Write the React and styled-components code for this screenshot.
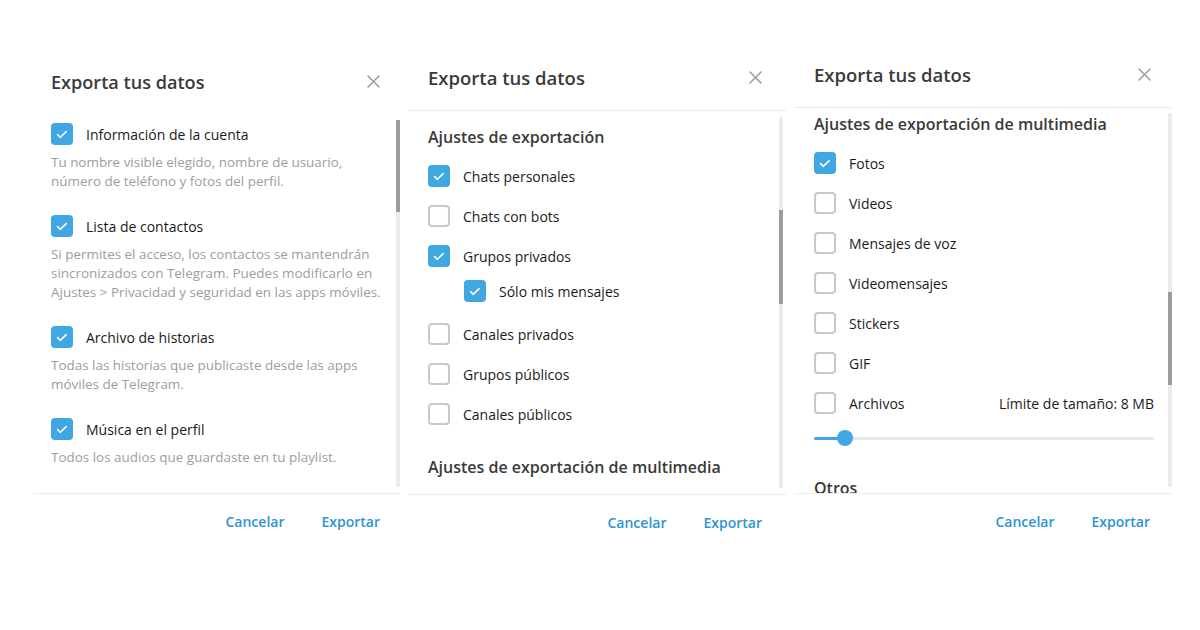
import React from "react";
import styled, { createGlobalStyle } from "styled-components";

const Global = createGlobalStyle`
  html, body { margin: 0; padding: 0; background: #ffffff; }
  body { font-family: "Open Sans", "Noto Sans", sans-serif; -webkit-font-smoothing: antialiased; }
  * { box-sizing: border-box; }
`;

const BLUE = "#40a7e3";

const Page = styled.div`
  width: 1200px;
  height: 630px;
  display: grid;
  grid-template-columns: 367px 378px 378px;
  column-gap: 8px;
  align-items: start;
  padding-left: 33px;
  overflow: hidden;
`;

const Dialog = styled.section`
  display: flex;
  flex-direction: column;
  margin-top: ${(p) => p.$top}px;
  background: #fff;
`;

const Header = styled.header`
  height: 62px;
  display: flex;
  align-items: center;
  justify-content: space-between;
  padding: 0 ${(p) => p.$padR}px 4px ${(p) => p.$padL}px;
  border-bottom: 1px solid ${(p) => (p.$divided ? "#ececec" : "transparent")};
`;

const Title = styled.h2`
  margin: 0;
  font-size: ${(p) => p.$size}px;
  font-weight: 600;
  color: #3a3a3a;
  letter-spacing: 0;
`;

const CloseButton = styled.button`
  border: 0;
  background: none;
  padding: 0;
  width: 14px;
  height: 14px;
  display: flex;
  align-items: center;
  justify-content: center;
  cursor: pointer;
`;

const Body = styled.div`
  position: relative;
  height: ${(p) => p.$height}px;
  overflow: hidden;
  padding: ${(p) => p.$padTop}px ${(p) => p.$padR}px 0 ${(p) => p.$padL}px;
`;

const Track = styled.div`
  position: absolute;
  right: ${(p) => p.$right}px;
  top: ${(p) => p.$top}px;
  bottom: 6px;
  width: 4px;
  background: #ececec;
`;

const Thumb = styled.div`
  position: absolute;
  left: 0;
  width: 4px;
  top: ${(p) => p.$offset}px;
  height: ${(p) => p.$length}px;
  background: #9c9c9c;
`;

const Option = styled.div`
  margin-bottom: 24px;
`;

const CheckLine = styled.label`
  display: flex;
  align-items: center;
  gap: 13px;
  height: ${(p) => p.$height || 22}px;
  padding-left: ${(p) => p.$indent || 0}px;
  margin-bottom: ${(p) => p.$after || 0}px;
  font-size: 14px;
  color: #1a1a1a;
`;

const LabelText = styled.span`
  flex: 1;
`;

const SideNote = styled.span`
  font-size: 14px;
  color: #1a1a1a;
`;

const Box = styled.span`
  width: 22px;
  height: 22px;
  flex: none;
  border-radius: 4px;
  display: flex;
  align-items: center;
  justify-content: center;
  background: ${(p) => (p.$on ? BLUE : "#fff")};
  border: ${(p) => (p.$on ? "none" : "2px solid #c9c9c9")};
`;

const Description = styled.p`
  margin: 8px 0 0;
  font-size: 13.45px;
  line-height: 19px;
  color: #9d9d9d;
`;

const Section = styled.h3`
  margin: ${(p) => p.$before || 0}px 0 7px;
  font-size: 16px;
  line-height: 24px;
  font-weight: 600;
  color: #3a3a3a;
`;

const SliderRow = styled.div`
  position: relative;
  height: 30px;
  display: flex;
  align-items: center;
`;

const SliderTrack = styled.div`
  position: relative;
  width: 100%;
  height: 3px;
  border-radius: 2px;
  background: #e1e9ef;
`;

const SliderFill = styled.div`
  position: absolute;
  left: 0;
  top: 0;
  bottom: 0;
  border-radius: 2px;
  background: ${BLUE};
`;

const SliderKnob = styled.div`
  position: absolute;
  top: 50%;
  width: 16px;
  height: 16px;
  margin: -8px 0 0 -8px;
  border-radius: 50%;
  background: ${BLUE};
`;

const Footer = styled.footer`
  height: 56px;
  border-top: 1px solid #ececec;
  display: flex;
  align-items: center;
  justify-content: flex-end;
  gap: 37px;
  padding-right: ${(p) => p.$padR}px;
  padding-bottom: 1px;
`;

const TextButton = styled.button`
  border: 0;
  background: none;
  padding: 0;
  font-family: inherit;
  font-size: 14px;
  font-weight: 600;
  color: #2e93d6;
  cursor: pointer;
`;

function Check({ on }) {
  return (
    <Box $on={on}>
      {on && (
        <svg width="22" height="22" viewBox="0 0 22 22">
          <path d="M6.6 11.6 L9.4 14.3 L15.2 8.6" fill="none" stroke="#fff" strokeWidth="1.6" strokeLinecap="round" strokeLinejoin="round" />
        </svg>
      )}
    </Box>
  );
}

function CloseIcon() {
  return (
    <svg width="13" height="13" viewBox="0 0 13 13">
      <path d="M1 1 L12 12 M12 1 L1 12" stroke="#9a9a9a" strokeWidth="1.5" strokeLinecap="round" />
    </svg>
  );
}

function Item({ on, label, indent, height = 40, after, note }) {
  return (
    <CheckLine $height={height} $indent={indent} $after={after}>
      <Check on={on} />
      <LabelText>{label}</LabelText>
      {note && <SideNote>{note}</SideNote>}
    </CheckLine>
  );
}

function Scrollbar({ right, top, offset, length }) {
  return (
    <Track $right={right} $top={top}>
      <Thumb $offset={offset} $length={length} />
    </Track>
  );
}

function DialogFrame({ top, padL, closeR, divided, titleSize, bodyHeight, bodyPadTop, bodyPadR, footerR, scroll, children }) {
  return (
    <Dialog $top={top}>
      <Header $padL={padL} $padR={closeR} $divided={divided}>
        <Title $size={titleSize}>Exporta tus datos</Title>
        <CloseButton aria-label="Cerrar">
          <CloseIcon />
        </CloseButton>
      </Header>
      <Body $height={bodyHeight} $padTop={bodyPadTop} $padL={padL} $padR={bodyPadR}>
        {children}
        <Scrollbar {...scroll} />
      </Body>
      <Footer $padR={footerR}>
        <TextButton>Cancelar</TextButton>
        <TextButton>Exportar</TextButton>
      </Footer>
    </Dialog>
  );
}

const accountOptions = [
  { label: "Información de la cuenta", text: ["Tu nombre visible elegido, nombre de usuario,", "número de teléfono y fotos del perfil."] },
  { label: "Lista de contactos", text: ["Si permites el acceso, los contactos se mantendrán", "sincronizados con Telegram. Puedes modificarlo en", "Ajustes > Privacidad y seguridad en las apps móviles."] },
  { label: "Archivo de historias", text: ["Todas las historias que publicaste desde las apps", "móviles de Telegram."] },
  { label: "Música en el perfil", text: ["Todos los audios que guardaste en tu playlist."] },
];

const mediaOptions = [
  { label: "Fotos", on: true },
  { label: "Videos" },
  { label: "Mensajes de voz" },
  { label: "Videomensajes" },
  { label: "Stickers" },
  { label: "GIF" },
];

export default function App() {
  return (
    <>
      <Global />
      <Page>
        <DialogFrame
          top={53}
          padL={18}
          closeR={20}
          titleSize={18.1}
          bodyHeight={378}
          bodyPadTop={8}
          bodyPadR={10}
          footerR={20}
          scroll={{ right: 0, top: 5, offset: 0, length: 92 }}
        >
          {accountOptions.map((o) => (
            <Option key={o.label}>
              <Item on label={o.label} height={22} />
              <Description>
                {o.text.map((line, i) => (
                  <React.Fragment key={i}>
                    {line}
                    {i < o.text.length - 1 && <br />}
                  </React.Fragment>
                ))}
              </Description>
            </Option>
          ))}
        </DialogFrame>

        <DialogFrame
          top={49}
          padL={20}
          closeR={24}
          divided
          titleSize={18.5}
          bodyHeight={383}
          bodyPadTop={14}
          bodyPadR={24}
          footerR={24}
          scroll={{ right: 3, top: 6, offset: 93, length: 94 }}
        >
          <Section>Ajustes de exportación</Section>
          <Item on label="Chats personales" />
          <Item label="Chats con bots" />
          <Item on label="Grupos privados" />
          <Item on label="Sólo mis mensajes" indent={36} height={30} after={8} />
          <Item label="Canales privados" />
          <Item label="Grupos públicos" />
          <Item label="Canales públicos" />
          <Section $before={21}>Ajustes de exportación de multimedia</Section>
        </DialogFrame>

        <DialogFrame
          top={46}
          padL={20}
          closeR={21}
          divided
          titleSize={18.5}
          bodyHeight={385}
          bodyPadTop={4}
          bodyPadR={18}
          footerR={22}
          scroll={{ right: 0, top: 5, offset: 179, length: 93 }}
        >
          <Section>Ajustes de exportación de multimedia</Section>
          {mediaOptions.map((o) => (
            <Item key={o.label} on={o.on} label={o.label} />
          ))}
          <Item label="Archivos" note="Límite de tamaño: 8 MB" />
          <SliderRow>
            <SliderTrack>
              <SliderFill style={{ width: "9%" }} />
              <SliderKnob style={{ left: "9%" }} />
            </SliderTrack>
          </SliderRow>
          <Section $before={23}>Otros</Section>
        </DialogFrame>
      </Page>
    </>
  );
}
